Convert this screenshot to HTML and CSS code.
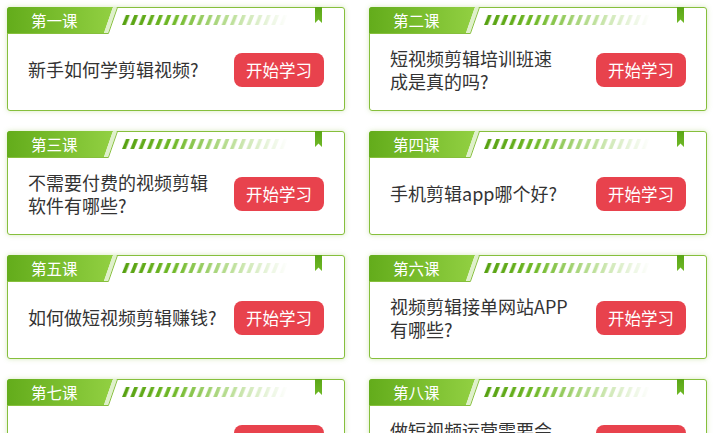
FILE: index.html
```html
<!DOCTYPE html>
<html lang="zh-CN">
<head>
<meta charset="utf-8">
<title>课程列表</title>
<link rel="stylesheet" href="styles.css">
</head>
<body>
<div class="grid">
  <div class="card">
    <div class="head"><div class="tab">第一课</div><div class="stripes"></div><div class="mark"></div></div>
    <div class="body"><p class="title">新手如何学剪辑视频?</p><a class="btn">开始学习</a></div>
  </div>
  <div class="card">
    <div class="head"><div class="tab">第二课</div><div class="stripes"></div><div class="mark"></div></div>
    <div class="body"><p class="title">短视频剪辑培训班速<br>成是真的吗?</p><a class="btn">开始学习</a></div>
  </div>
  <div class="card">
    <div class="head"><div class="tab">第三课</div><div class="stripes"></div><div class="mark"></div></div>
    <div class="body"><p class="title">不需要付费的视频剪辑<br>软件有哪些?</p><a class="btn">开始学习</a></div>
  </div>
  <div class="card">
    <div class="head"><div class="tab">第四课</div><div class="stripes"></div><div class="mark"></div></div>
    <div class="body"><p class="title">手机剪辑app哪个好?</p><a class="btn">开始学习</a></div>
  </div>
  <div class="card">
    <div class="head"><div class="tab">第五课</div><div class="stripes"></div><div class="mark"></div></div>
    <div class="body"><p class="title">如何做短视频剪辑赚钱?</p><a class="btn">开始学习</a></div>
  </div>
  <div class="card">
    <div class="head"><div class="tab">第六课</div><div class="stripes"></div><div class="mark"></div></div>
    <div class="body"><p class="title">视频剪辑接单网站APP<br>有哪些?</p><a class="btn">开始学习</a></div>
  </div>
  <div class="card">
    <div class="head"><div class="tab">第七课</div><div class="stripes"></div><div class="mark"></div></div>
    <div class="body"><p class="title">新手学剪辑需要多久?</p><a class="btn">开始学习</a></div>
  </div>
  <div class="card">
    <div class="head"><div class="tab">第八课</div><div class="stripes"></div><div class="mark"></div></div>
    <div class="body"><p class="title">做短视频运营需要会<br>哪些技能?</p><a class="btn">开始学习</a></div>
  </div>
</div>
</body>
</html>
```
FILE: styles.css
```css
html, body {
  margin: 0;
  padding: 0;
  background: #ffffff;
}
body {
  font-family: "Noto Sans CJK SC", "Noto Sans", sans-serif;
}
.grid {
  display: grid;
  grid-template-columns: 338px 338px;
  column-gap: 24px;
  row-gap: 20px;
  padding: 7px 0 0 7px;
}
.card {
  border: 1px solid #86bf3c;
  border-radius: 3px;
  height: 104px;
  box-sizing: border-box;
  box-shadow: 0 0 5px rgba(140, 190, 70, 0.35);
  background: #fff;
}
.head {
  display: flex;
  height: 27px;
  margin: -1px 0 0 -1px;
}
.tab {
  flex: none;
  width: 112px;
  height: 27px;
  box-sizing: border-box;
  padding-left: 24px;
  line-height: 26px;
  font-size: 15.5px;
  color: #fff;
  border-top-left-radius: 3px;
  background-image: url("data:image/svg+xml,%3Csvg xmlns='http://www.w3.org/2000/svg' width='112' height='27'%3E%3Cdefs%3E%3ClinearGradient id='g' x1='0' x2='1' y1='0' y2='0'%3E%3Cstop offset='0' stop-color='%2363ac1b'/%3E%3Cstop offset='1' stop-color='%2392d042'/%3E%3C/linearGradient%3E%3C/defs%3E%3Cpolygon points='0,0 106,0 97,26 0,26' fill='url(%23g)'/%3E%3Cpolygon points='106,0 110,0 101,26 97,26' fill='%23dff0cb'/%3E%3Cpath d='M110.6 0 L101.4 26.5 L0 26.5' fill='none' stroke='%2386bf3c' stroke-width='1'/%3E%3C/svg%3E");
  background-repeat: no-repeat;
}
.stripes {
  flex: none;
  width: 166px;
  height: 10px;
  margin: 8px 0 0 3px;
  background-image: url("data:image/svg+xml,%3Csvg xmlns='http://www.w3.org/2000/svg' width='166' height='10'%3E%3Cdefs%3E%3ClinearGradient id='g' x1='0' x2='1' y1='0' y2='0'%3E%3Cstop offset='0' stop-color='%2356a010'/%3E%3Cstop offset='0.3' stop-color='%236fb826'/%3E%3Cstop offset='0.65' stop-color='%23bcdf98'/%3E%3Cstop offset='1' stop-color='%23ffffff'/%3E%3C/linearGradient%3E%3Cpattern id='p' width='8.3' height='10' patternUnits='userSpaceOnUse'%3E%3Cpolygon points='4,0 7.8,0 3.8,10 0,10' fill='%23fff'/%3E%3C/pattern%3E%3Cmask id='m'%3E%3Crect width='166' height='10' fill='url(%23p)'/%3E%3C/mask%3E%3C/defs%3E%3Crect width='166' height='10' fill='url(%23g)' mask='url(%23m)'/%3E%3C/svg%3E");
  background-repeat: no-repeat;
}
.mark {
  flex: none;
  width: 7px;
  height: 16px;
  margin-left: auto;
  margin-right: 22px;
  background-image: url("data:image/svg+xml,%3Csvg xmlns='http://www.w3.org/2000/svg' width='7' height='16'%3E%3Cdefs%3E%3ClinearGradient id='g' x1='0' x2='0' y1='0' y2='1'%3E%3Cstop offset='0' stop-color='%235aa616'/%3E%3Cstop offset='1' stop-color='%236fb827'/%3E%3C/linearGradient%3E%3C/defs%3E%3Cpolygon points='0,0 7,0 7,16 3.5,12.5 0,16' fill='url(%23g)'/%3E%3C/svg%3E");
  background-repeat: no-repeat;
}
.body {
  display: flex;
  align-items: center;
  justify-content: space-between;
  height: 76px;
  box-sizing: border-box;
  padding: 0 20px 5px 20px;
}
.title {
  margin: 0;
  font-size: 18px;
  line-height: 23px;
  color: #333333;
  width: 190px;
}
.btn {
  flex: none;
  width: 90px;
  height: 34px;
  border-radius: 8px;
  background: #e8424d;
  color: #fff;
  font-size: 16.5px;
  line-height: 34px;
  text-align: center;
}
```
